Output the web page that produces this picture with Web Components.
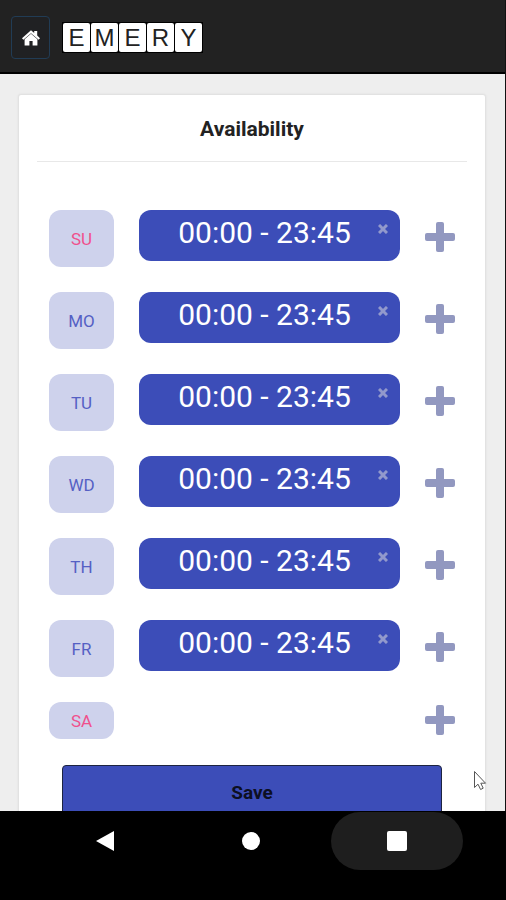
<!DOCTYPE html>
<html lang="en">
<head>
<meta charset="utf-8">
<meta name="viewport" content="width=device-width, initial-scale=1">
<title>Availability</title>
<style>
  body {
    margin: 0;
    font-family: Roboto, "Liberation Sans", sans-serif;
    background: #000;
  }
</style>
</head>
<body>
<availability-app></availability-app>

<script>
class TileLogo extends HTMLElement {
  constructor() {
    super();
    this.attachShadow({ mode: 'open' });
  }

  connectedCallback() {
    const tiles = this.getAttribute('word').split('').map(c => `<span>${c}</span>`).join('');
    this.shadowRoot.innerHTML = `
      <style>
        :host {
          display: flex;
          gap: 1px;
          padding: 1px;
          background: #000;
          font: 24px/30px "Liberation Sans", Arial, sans-serif;
          color: #222;
        }
        span {
          width: 27px;
          height: 29px;
          border-radius: 2px;
          background: #fff;
          text-align: center;
        }
      </style>${tiles}`;
  }
}
customElements.define('tile-logo', TileLogo);

class TopBar extends HTMLElement {
  constructor() {
    super();
    this.attachShadow({ mode: 'open' });
    this.shadowRoot.innerHTML = `
      <style>
        :host {
          display: flex;
          align-items: center;
          gap: 12px;
          height: 74px;
          padding: 3px 11px 0;
          box-sizing: border-box;
          background: #222;
          border-bottom: 2px solid #000;
          flex: none;
        }
        button {
          display: flex;
          align-items: center;
          justify-content: center;
          width: 39px;
          height: 43px;
          padding: 0;
          background: #202123;
          border: 1px solid #213c55;
          border-radius: 4px;
        }
      </style>
      <button type="button" aria-label="Home">
        <svg width="18" height="16" viewBox="0 0 18 16" fill="#fff">
          <path d="M9 0.2 L12.2 3 V1 H15.2 V5.6 L18 8.2 L16.7 9.7 L9 3.2 L1.3 9.7 L0 8.2 Z"/>
          <path d="M9 3.8 L15.4 9.2 V15.6 H10.6 V11 H7.4 V15.6 H2.6 V9.2 Z"/>
        </svg>
      </button>
      <slot></slot>`;
  }
}
customElements.define('top-bar', TopBar);

class DayRow extends HTMLElement {
  constructor() {
    super();
    this.attachShadow({ mode: 'open' });
  }

  connectedCallback() {
    const day = this.getAttribute('day');
    const time = this.getAttribute('time');
    const weekend = day === 'SU' || day === 'SA';

    const slot = time ? `
      <div class="time">
        <span>${time}</span>
        <button class="remove" type="button" aria-label="Remove ${day} time">
          <svg width="10" height="10" viewBox="0 0 10 10" stroke="#9299cc" stroke-width="3">
            <path d="M1 1 L9 9 M9 1 L1 9"/>
          </svg>
        </button>
      </div>` : '';

    this.shadowRoot.innerHTML = `
      <style>
        :host {
          display: grid;
          grid-template-columns: 65px 1fr 30px;
          column-gap: 25px;
          min-height: 37px;
        }
        .day {
          display: flex;
          align-items: center;
          justify-content: center;
          border-radius: 12px;
          background: #ced2ec;
          color: ${weekend ? '#f0508c' : '#5560c4'};
          font-size: 17px;
          line-height: 20px;
        }
        .time {
          position: relative;
          height: 51px;
          margin-bottom: 6px;
          border-radius: 12px;
          background: #3c4db8;
          color: #fff;
          font-size: 30px;
          line-height: 46px;
          text-align: center;
        }
        .time span { margin-right: 10px; }
        button {
          padding: 0;
          border: 0;
          background: none;
        }
        button svg { display: block; }
        .remove {
          position: absolute;
          top: 14px;
          right: 12px;
        }
        .add {
          grid-column: 3;
          display: flex;
          justify-content: center;
          align-items: center;
          height: ${time ? 53 : 35}px;
        }
      </style>
      <div class="day">${day}</div>
      ${slot}
      <button class="add" type="button" aria-label="Add ${day} time">
        <svg width="30" height="30" viewBox="0 0 30 30" fill="#9298c0">
          <rect x="11" y="0" width="8" height="30" rx="2"/>
          <rect x="0" y="11" width="30" height="8" rx="2"/>
        </svg>
      </button>`;
  }
}
customElements.define('day-row', DayRow);

class AvailabilityCard extends HTMLElement {
  constructor() {
    super();
    this.attachShadow({ mode: 'open' });
    this.shadowRoot.innerHTML = `
      <style>
        :host {
          display: block;
          margin: 20px 19px 0 18px;
          padding: 0 18px 20px;
          background: #fff;
          border: 1px solid #e2e2e2;
          border-radius: 3px;
          box-shadow: 0 0 2px #ddd;
        }
        h1 {
          margin: 0;
          padding: 21px 0 19px;
          border-bottom: 1px solid #e8e8e8;
          color: #222;
          font-size: 21px;
          line-height: 26px;
          font-weight: 700;
          text-align: center;
        }
        .days {
          display: flex;
          flex-direction: column;
          gap: 25px;
          padding: 48px 12px 26px;
        }
        .save {
          display: block;
          width: calc(100% - 50px);
          height: 56px;
          margin: 0 auto;
          padding: 0;
          border: 1px solid #1d2440;
          border-radius: 4px;
          background: #3c4db8;
          color: #0c0f22;
          font: 700 19px/24px Roboto, sans-serif;
        }
      </style>
      <h1><slot name="title"></slot></h1>
      <div class="days"><slot></slot></div>
      <button class="save" type="button">Save</button>`;
  }
}
customElements.define('availability-card', AvailabilityCard);

class NavBar extends HTMLElement {
  constructor() {
    super();
    this.attachShadow({ mode: 'open' });
    this.shadowRoot.innerHTML = `
      <style>
        :host {
          display: flex;
          gap: 14px;
          box-sizing: border-box;
          height: 89px;
          padding: 1px 43px 30px 39px;
          background: #000;
          flex: none;
        }
        button {
          flex: 1;
          display: flex;
          align-items: center;
          justify-content: center;
          padding: 0;
          border: 0;
          border-radius: 29px;
          background: none;
        }
        .active { background: #1e1e1e; }
      </style>
      <button type="button" aria-label="Back">
        <svg width="20" height="22" viewBox="0 0 20 22" fill="#fff"><path d="M19 1 V21 L1 11 Z"/></svg>
      </button>
      <button type="button" aria-label="Home screen">
        <svg width="20" height="20" viewBox="0 0 20 20" fill="#fff"><circle cx="10" cy="10" r="9"/></svg>
      </button>
      <button class="active" type="button" aria-label="Recent apps">
        <svg width="20" height="20" viewBox="0 0 20 20" fill="#fff"><rect width="20" height="20" rx="2"/></svg>
      </button>`;
  }
}
customElements.define('nav-bar', NavBar);

class AvailabilityApp extends HTMLElement {
  constructor() {
    super();
    this.attachShadow({ mode: 'open' });
  }

  connectedCallback() {
    const days = ['SU', 'MO', 'TU', 'WD', 'TH', 'FR'];
    const rows = days.map(d => `<day-row day="${d}" time="00:00 - 23:45"></day-row>`).join('');

    this.shadowRoot.innerHTML = `
      <style>
        :host {
          display: flex;
          flex-direction: column;
          height: 100vh;
          position: relative;
        }
        .screen {
          display: flex;
          flex-direction: column;
          flex: 1;
          min-height: 0;
          border-right: 1px solid #111;
          background: #eee;
        }
        main {
          flex: 1;
          min-height: 0;
          overflow: hidden;
        }
        .pointer {
          position: absolute;
          right: 19px;
          bottom: 109px;
        }
      </style>
      <div class="screen">
        <top-bar><tile-logo word="EMERY"></tile-logo></top-bar>
        <main>
          <availability-card>
            <span slot="title">Availability</span>
            ${rows}
            <day-row day="SA"></day-row>
          </availability-card>
        </main>
      </div>
      <nav-bar></nav-bar>
      <svg class="pointer" width="14" height="21" viewBox="0 0 14 21" fill="#fff" stroke="#555">
        <path d="M1.5 1.5 V17.5 L5 14.2 L7.6 19.5 L10.2 18.2 L7.8 13.2 H12.5 Z"/>
      </svg>`;
  }
}
customElements.define('availability-app', AvailabilityApp);
</script>
</body>
</html>
